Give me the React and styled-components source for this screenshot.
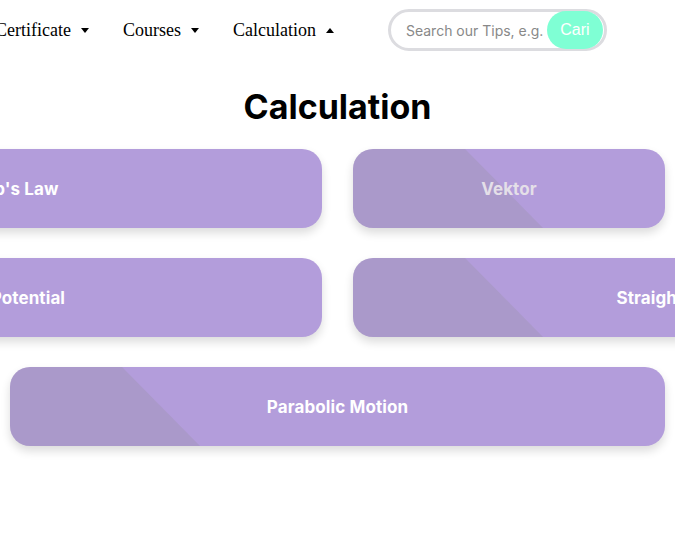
import React from 'react';
import styled, { createGlobalStyle } from 'styled-components';

const GlobalStyle = createGlobalStyle`
  html, body {
    margin: 0;
    padding: 0;
    background: #fff;
    overflow: hidden;
  }
`;

const Page = styled.div`
  width: 100%;
  min-height: 546px;
  overflow: hidden;
`;

const Header = styled.header`
  display: flex;
  align-items: center;
  height: 60px;
  margin-left: -5px;
`;

const NavList = styled.nav`
  display: flex;
  align-items: center;
  gap: 34px;
`;

const NavItem = styled.div`
  display: flex;
  align-items: center;
  gap: 10px;
  font-family: "Liberation Serif", "Times New Roman", serif;
  font-size: 18px;
  color: #000;
  white-space: nowrap;
  cursor: pointer;
`;

const Caret = styled.span`
  width: 0;
  height: 0;
  border-left: 4px solid transparent;
  border-right: 4px solid transparent;
  ${props => (props.$up ? 'border-bottom: 5px solid #000;' : 'border-top: 5px solid #000;')}
`;

const SearchBox = styled.form`
  display: flex;
  align-items: center;
  box-sizing: border-box;
  width: 219px;
  height: 42px;
  margin-left: 54px;
  padding: 0 1px 0 15px;
  border: 3px solid #dcdce0;
  border-radius: 21px;
`;

const SearchInput = styled.input`
  flex: 1;
  min-width: 0;
  border: none;
  outline: none;
  background: transparent;
  padding: 0;
  font-family: Inter, "Noto Sans", sans-serif;
  font-size: 14px;
  color: #888;
  &::placeholder {
    color: #888;
  }
`;

const SearchButton = styled.button`
  flex: none;
  width: 56px;
  height: 38px;
  border: none;
  border-radius: 19px;
  background: #7fffd4;
  color: #fff;
  font-family: "Liberation Sans", Arial, sans-serif;
  font-size: 16px;
  cursor: pointer;
`;

const Title = styled.h1`
  margin: 26px 0 21px;
  text-align: center;
  font-family: Inter, "Noto Sans", sans-serif;
  font-weight: 700;
  font-size: 34px;
  line-height: 42px;
  color: #000;
`;

const Grid = styled.section`
  display: grid;
  grid-template-columns: 312px 312px;
  column-gap: 31px;
  row-gap: 30px;
  width: 655px;
  margin: 0 auto;
`;

const Card = styled.a`
  position: relative;
  display: flex;
  align-items: center;
  justify-content: center;
  height: 79px;
  border-radius: 20px;
  background: #b39ddb;
  box-shadow: 0 5px 10px rgba(0, 0, 0, 0.14);
  overflow: hidden;
  grid-column: ${props => (props.$span ? '1 / span 2' : 'auto')};
  margin-left: ${props => -(props.$bleedLeft || 0)}px;
  margin-right: ${props => -(props.$bleedRight || 0)}px;
  cursor: pointer;

  &::before {
    content: '';
    position: absolute;
    inset: 0;
    background: rgba(140, 140, 140, 0.22);
    clip-path: polygon(0 0, 112px 0, 190px 100%, 0 100%);
  }
`;

const CardLabel = styled.span`
  position: relative;
  z-index: 1;
  white-space: nowrap;
  font-family: Inter, "Noto Sans", sans-serif;
  font-weight: 700;
  font-size: 17px;
  letter-spacing: 0.1px;
  color: ${props => (props.$dim ? '#e4dfe8' : '#fff')};
`;

const cards = [
  { label: "Coulomb's Law", bleedLeft: 344 },
  { label: 'Vektor', dim: true },
  { label: 'Electric Potential', bleedLeft: 344 },
  { label: 'Straight Line Motion', bleedRight: 384 },
  { label: 'Parabolic Motion', span: true },
];

export default function App() {
  return (
    <Page>
      <GlobalStyle />
      <Header>
        <NavList>
          <NavItem>Certificate <Caret /></NavItem>
          <NavItem>Courses <Caret /></NavItem>
          <NavItem>Calculation <Caret $up /></NavItem>
        </NavList>
        <SearchBox onSubmit={e => e.preventDefault()}>
          <SearchInput placeholder="Search our Tips, e.g. Coulomb" />
          <SearchButton type="submit">Cari</SearchButton>
        </SearchBox>
      </Header>
      <Title>Calculation</Title>
      <Grid>
        {cards.map(card => (
          <Card
            key={card.label}
            $span={card.span}
            $bleedLeft={card.bleedLeft}
            $bleedRight={card.bleedRight}
          >
            <CardLabel $dim={card.dim}>{card.label}</CardLabel>
          </Card>
        ))}
      </Grid>
    </Page>
  );
}
